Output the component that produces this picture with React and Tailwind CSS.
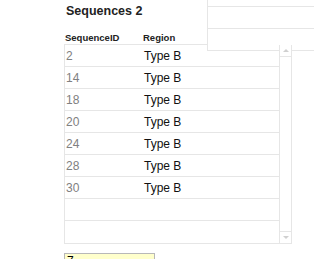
import React from "react";

const rows = ["2", "14", "18", "20", "24", "28", "30", "", ""];

function ScrollBar() {
  return (
    <div className="flex w-[12px] flex-col border-l border-[#e6e6e6]">
      <div className="flex h-[12px] items-center justify-center border-b border-[#e6e6e6]">
        <div className="h-0 w-0 border-x-[3px] border-b-[3px] border-x-transparent border-b-[#d0d0d0]" />
      </div>
      <div className="flex-1" />
      <div className="flex h-[12px] items-center justify-center border-t border-[#e6e6e6]">
        <div className="h-0 w-0 border-x-[3px] border-t-[3px] border-x-transparent border-t-[#d0d0d0]" />
      </div>
    </div>
  );
}

export default function App() {
  return (
    <div
      className="relative h-[259px] w-[314px] overflow-hidden bg-white pl-[64px]"
      style={{ fontFamily: '"Liberation Sans", Arial, sans-serif' }}
    >
      {/* panel peeking in from the top right */}
      <div className="absolute left-[207px] top-[-15px] z-10 w-[120px] border-l border-[#e6e6e6] bg-white">
        <div className="h-[22px] border-b border-[#e6e6e6]" />
        <div className="h-[22px] border-b border-[#e6e6e6]" />
        <div className="h-[22px] border-b border-[#e6e6e6]" />
      </div>

      <h2 className="pt-[4px] pl-[2px] text-[12.5px] font-bold leading-[15px] text-[#222]">
        Sequences 2
      </h2>

      <div className="mt-[13px] flex h-[12px] text-[9.5px] font-bold leading-[12px] text-[#222]">
        <div className="w-[79px] pl-[1px]">SequenceID</div>
        <div>Region</div>
      </div>

      <div className="relative flex w-[228px] border-b border-l border-t border-[#e6e6e6]">
        <div className="flex-1">
          {rows.map((id, i) => (
            <div
              key={i}
              className="flex h-[22px] items-center border-b border-[#e6e6e6] text-[12px] last:border-b-0"
            >
              <div className="w-[79px] pl-[1px] text-[#808080]">{id}</div>
              <div className="text-[#111]">{id ? "Type B" : ""}</div>
            </div>
          ))}
        </div>
        <div className="relative z-20 flex border-r border-[#e6e6e6] bg-white">
          <ScrollBar />
        </div>
      </div>

      <div className="mt-[9px] h-[20px] w-[91px] border border-[#b8b8b8] bg-[#ffffcc] pl-[2px] text-[12px] leading-[14px] text-black">
        7
      </div>
    </div>
  );
}
